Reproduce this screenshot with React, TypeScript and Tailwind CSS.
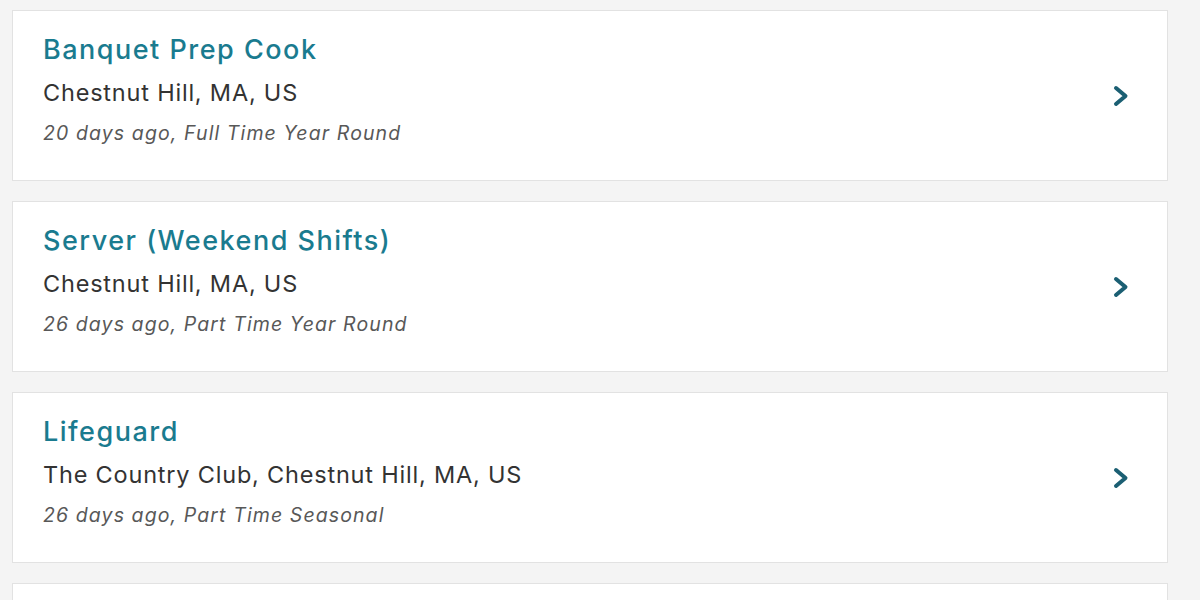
const jobs = [
  {
    title: "Banquet Prep Cook",
    location: "Chestnut Hill, MA, US",
    meta: "20 days ago, Full Time Year Round",
  },
  {
    title: "Server (Weekend Shifts)",
    location: "Chestnut Hill, MA, US",
    meta: "26 days ago, Part Time Year Round",
  },
  {
    title: "Lifeguard",
    location: "The Country Club, Chestnut Hill, MA, US",
    meta: "26 days ago, Part Time Seasonal",
  },
  { title: "", location: "", meta: "" },
];

function Chevron() {
  return (
    <svg width="16" height="24" viewBox="0 0 16 24" fill="none" className="shrink-0">
      <polyline
        points="3,4 12.5,12 3,20"
        stroke="#1b5f73"
        strokeWidth="4"
        strokeLinecap="round"
        strokeLinejoin="round"
      />
    </svg>
  );
}

export default function App() {
  return (
    <div
      className="h-[600px] overflow-hidden bg-[#f4f4f4] pt-[10px] pl-[12px]"
      style={{ fontFamily: 'Inter, "Open Sans", sans-serif' }}
    >
      <div className="w-[1156px] flex flex-col gap-[20px]">
        {jobs.map((job, i) => (
          <div
            key={i}
            className="h-[171px] shrink-0 bg-white border border-[#e2e2e2] flex items-center justify-between pl-[30px] pr-[38px]"
          >
            <div className="flex flex-col self-start pt-[21px]">
              <div className="text-[27px] leading-[36px] font-medium tracking-[1.5px] text-[#1a7b8f]">
                {job.title}
              </div>
              <div className="mt-[8.5px] text-[23.5px] leading-[32px] tracking-[0.8px] text-[#333333]">
                {job.location}
              </div>
              <div className="mt-[10.5px] text-[19.5px] leading-[28px] italic tracking-[1.1px] text-[#585858]">
                {job.meta}
              </div>
            </div>
            {job.title && <Chevron />}
          </div>
        ))}
      </div>
    </div>
  );
}
